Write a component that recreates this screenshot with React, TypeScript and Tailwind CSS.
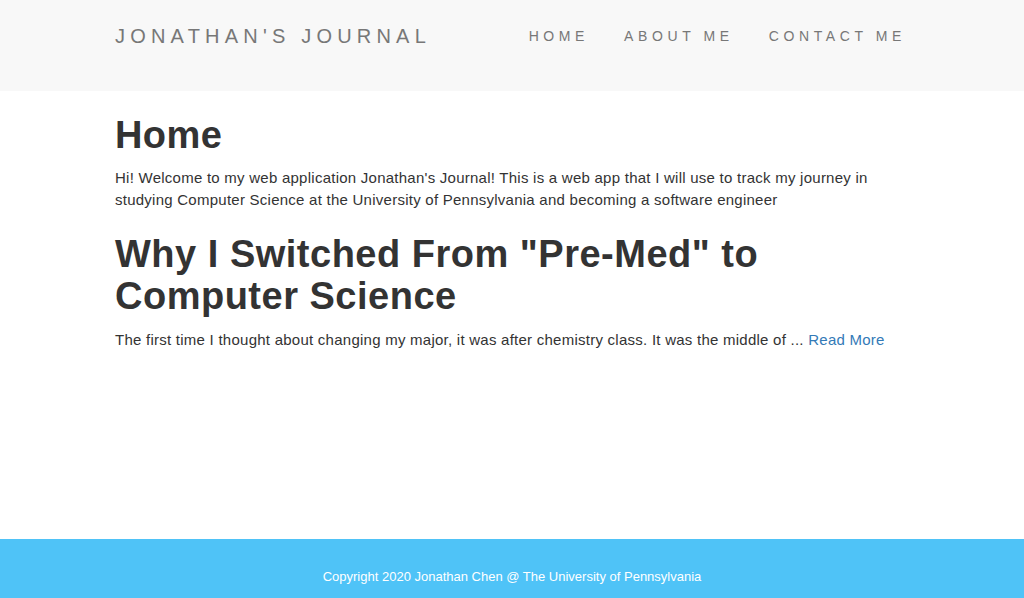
export default function App() {
  const links = ['Home', 'About Me', 'Contact Me'];

  return (
    <div className="min-h-screen flex flex-col bg-white text-[#333] font-['Liberation_Sans',Arial,sans-serif]">
      {/* Navbar */}
      <nav className="h-[91px] bg-[#f8f8f8]">
        <div className="w-[794px] mx-auto h-[72px] flex items-center justify-between">
          <a href="#" className="text-[20px] tracking-[5.2px] uppercase text-[#777]">
            Jonathan's Journal
          </a>
          <ul className="flex gap-[35px] mr-[3px]">
            {links.map((l) => (
              <li key={l}>
                <a href="#" className="text-[14px] tracking-[4.6px] uppercase text-[#777]">
                  {l}
                </a>
              </li>
            ))}
          </ul>
        </div>
      </nav>

      {/* Content */}
      <main className="flex-1">
        <div className="w-[794px] mx-auto">
          <h1 className="mt-[23px] text-[38px] leading-[42px] font-bold tracking-[0.4px]">Home</h1>
          <p className="mt-[11px] text-[15px] leading-[22px] tracking-[0.25px]">
            Hi! Welcome to my web application Jonathan's Journal! This is a web app that I will use to track my
            journey in studying Computer Science at the University of Pennsylvania and becoming a software engineer
          </p>
          <h1 className="mt-[22px] text-[38px] leading-[42px] font-bold tracking-[0.5px]">
            Why I Switched From "Pre-Med" to Computer Science
          </h1>
          <p className="mt-[12px] text-[15px] leading-[22px] tracking-[0.25px]">
            The first time I thought about changing my major, it was after chemistry class. It was the middle of ...{' '}
            <a href="#" className="text-[#337ab7]">Read More</a>
          </p>
        </div>
      </main>

      {/* Footer */}
      <footer className="bg-[#4fc3f7] pt-[29px] pb-[12px] text-center text-white text-[13px] leading-[18px]">
        Copyright 2020 Jonathan Chen @ The University of Pennsylvania
      </footer>
    </div>
  );
}
